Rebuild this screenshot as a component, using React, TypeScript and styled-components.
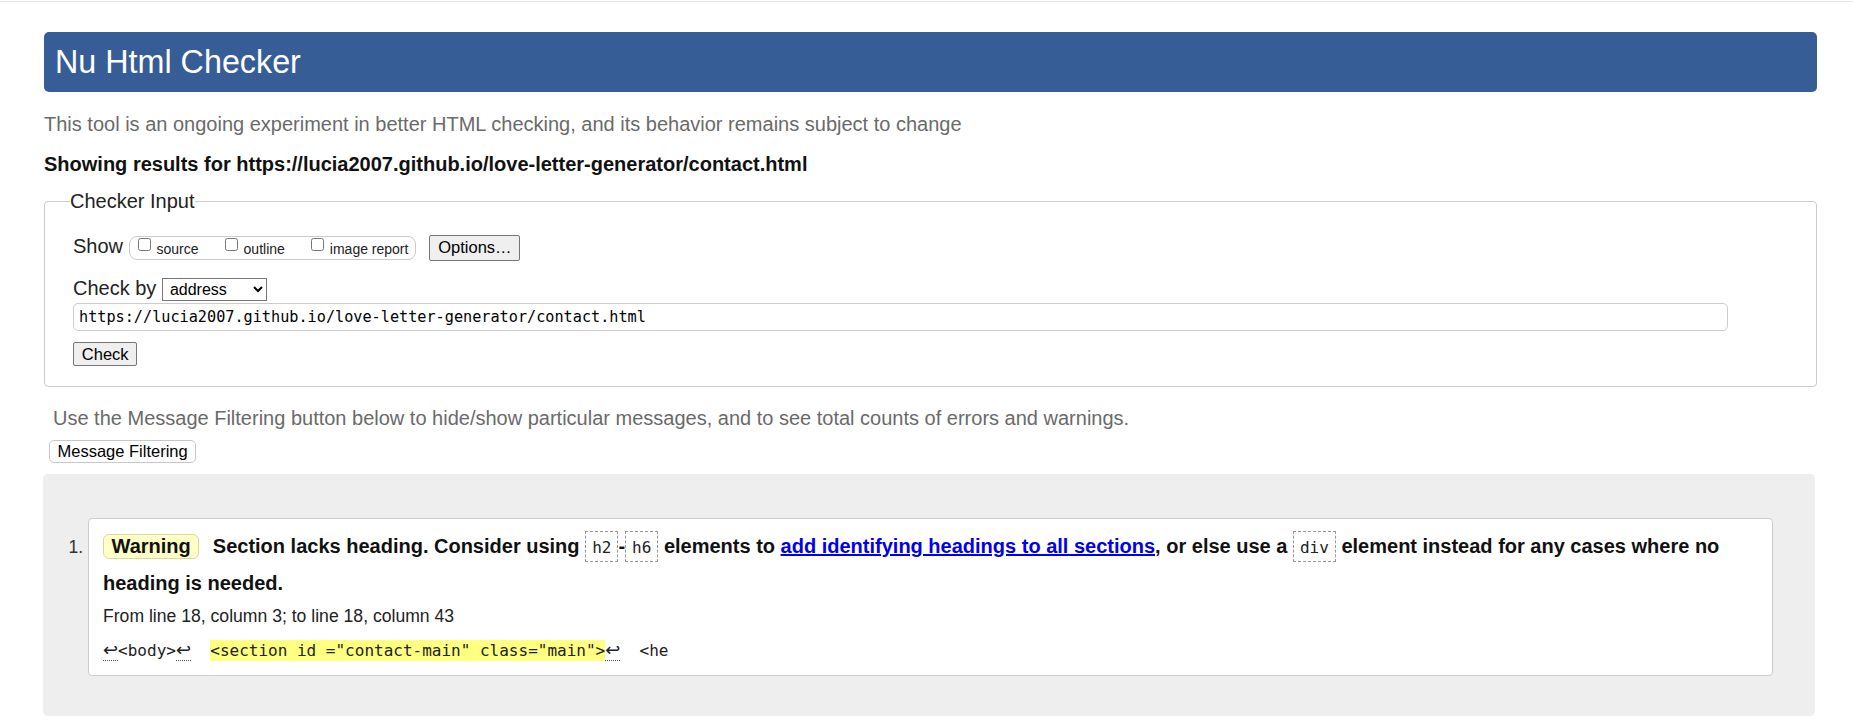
import React from 'react';
import styled, { createGlobalStyle } from 'styled-components';

const GlobalStyle = createGlobalStyle`
  html, body {
    margin: 0;
    padding: 0;
    background: #fff;
  }
  body {
    font-family: "Liberation Sans", Arial, sans-serif;
    color: #222;
  }
`;

const SANS = '"Liberation Sans", Arial, sans-serif';
const MONO = '"DejaVu Sans Mono", "Liberation Mono", monospace';

const TopRule = styled.div`
  height: 1px;
  margin-top: 1px;
  background: #e2e2e2;
`;

const Page = styled.main`
  padding: 30px 36px 0 44px;
`;

const Banner = styled.h1`
  margin: 0;
  padding: 11.5px 11px;
  border-radius: 5px;
  background: #365d95;
  color: #fff;
  font-size: 32.3px;
  font-weight: normal;
  line-height: normal;
`;

const Intro = styled.p`
  margin: 20.6px 0 0;
  color: #6a6a6a;
  font-size: 20px;
  line-height: normal;
`;

const ResultsFor = styled.p`
  margin: 17.3px 0 0;
  color: #111;
  font-size: 20px;
  font-weight: bold;
  line-height: normal;
`;

const Fieldset = styled.fieldset`
  margin: 14.3px 0 0;
  padding: 0 28px 20px;
  min-width: 0;
  border: 1px solid #ccc;
  border-radius: 4px;
`;

const Legend = styled.legend`
  margin-left: -3px;
  padding: 0;
  color: #222;
  font-size: 20px;
  line-height: normal;
`;

const Row = styled.div<{ $align: string; $top: number }>`
  display: flex;
  align-items: ${(p) => p.$align};
  margin-top: ${(p) => p.$top}px;
`;

const FieldLabel = styled.span`
  margin-right: 5.5px;
  color: #222;
  font-size: 20px;
  line-height: normal;
`;

const ShowGroup = styled.span`
  display: inline-flex;
  align-items: flex-start;
  box-sizing: border-box;
  height: 24px;
  margin-top: 1.5px;
  padding: 0 7px 0 4px;
  border: 1px solid #ccc;
  border-radius: 8px;
`;

const CheckLabel = styled.label<{ $last?: boolean }>`
  display: inline-flex;
  align-items: flex-start;
  margin-right: ${(p) => (p.$last ? 0 : 22)}px;
  color: #222;
  font-size: 14px;
  line-height: 16px;
`;

const Box = styled.input`
  width: 13px;
  height: 13px;
  margin: 1px 6px 0 4px;
`;

const BoxText = styled.span`
  margin-top: 4px;
`;

const GrayButton = styled.button<{ $h: number; $top?: number; $left?: number }>`
  box-sizing: border-box;
  height: ${(p) => p.$h}px;
  margin: ${(p) => p.$top || 0}px 0 0 ${(p) => p.$left || 0}px;
  padding: 0 7.8px;
  border: 1px solid #767676;
  border-radius: 2px;
  background: #efefef;
  color: #000;
  font-family: ${SANS};
  font-size: 16.5px;
  line-height: normal;
`;

const Select = styled.select`
  box-sizing: border-box;
  width: 105px;
  height: 23px;
  padding: 0 0 0 3px;
  border: 1px solid #767676;
  border-radius: 0;
  background: #fff;
  color: #000;
  font-family: ${SANS};
  font-size: 16px;
`;

const UrlInput = styled.input`
  display: block;
  box-sizing: border-box;
  width: calc(100% - 60px);
  height: 28px;
  margin: 2px 0 0;
  padding: 0 5px;
  border: 1px solid #ccc;
  border-radius: 5px;
  color: #000;
  font-family: ${MONO};
  font-size: 15.2px;
`;

const Hint = styled.p`
  margin: 19.6px 0 0 9px;
  color: #6a6a6a;
  font-size: 20px;
  line-height: normal;
`;

const FilterButton = styled.button`
  display: block;
  box-sizing: border-box;
  height: 23px;
  margin: 10.4px 0 0 5px;
  padding: 0 7.5px;
  border: 1px solid #c8c8c8;
  border-radius: 5px;
  background: #fff;
  color: #000;
  font-family: ${SANS};
  font-size: 16.5px;
  line-height: normal;
`;

const Results = styled.section`
  margin: 11px 2px 0 -1px;
  padding: 44px 42px 40px 45px;
  border-radius: 5px;
  background: #eee;
`;

const MessageList = styled.ol`
  margin: 0;
  padding: 0;
  list-style: decimal;
`;

const MessageItem = styled.li`
  padding: 8.6px 14px 15px;
  border: 1px solid #ccc;
  border-radius: 4px;
  background: #fff;
  color: #333;
  font-size: 17.6px;

  &::marker {
    color: #333;
    font-size: 17.6px;
  }
`;

const MessageText = styled.p`
  margin: 0;
  color: #111;
  font-size: 20px;
  font-weight: bold;
  line-height: 37px;
`;

const Badge = styled.strong`
  display: inline-block;
  margin-right: 8px;
  padding: 0 7.5px;
  border: 1px solid #dcd89c;
  border-radius: 6px;
  background: #ffffc8;
  line-height: normal;
`;

const Code = styled.code`
  display: inline-block;
  padding: 6px 6px 4px;
  border: 1px dashed #999;
  color: #222;
  font-family: ${MONO};
  font-size: 16px;
  font-weight: normal;
  line-height: normal;
`;

const DocLink = styled.a`
  color: #0000ee;
  text-decoration: underline;
`;

const Location = styled.p`
  margin: 4px 0 0;
  color: #222;
  font-size: 17.6px;
  line-height: normal;
`;

const Extract = styled.p`
  margin: 12px 0 0;
  color: #222;
  font-family: ${MONO};
  font-size: 16px;
  line-height: normal;
  white-space: pre;
`;

const LineFeed = styled.span`
  border-bottom: 1px dotted #555;
  font-family: "DejaVu Sans", sans-serif;
  font-size: 18px;
`;

const Mark = styled.mark`
  padding: 1px 0;
  background: #ffff80;
  color: #222;
`;

const url = 'https://lucia2007.github.io/love-letter-generator/contact.html';

const options = [
  { name: 'source', last: false },
  { name: 'outline', last: false },
  { name: 'image report', last: true },
];

export default function App() {
  return (
    <>
      <GlobalStyle />
      <TopRule />
      <Page>
        <Banner>Nu Html Checker</Banner>
        <Intro>
          This tool is an ongoing experiment in better HTML checking, and its behavior remains subject to change
        </Intro>
        <ResultsFor>Showing results for {url}</ResultsFor>

        <Fieldset>
          <Legend>Checker Input</Legend>
          <Row $align="flex-start" $top={21.4}>
            <FieldLabel>Show</FieldLabel>
            <ShowGroup>
              {options.map((o) => (
                <CheckLabel key={o.name} $last={o.last}>
                  <Box type="checkbox" />
                  <BoxText>{o.name}</BoxText>
                </CheckLabel>
              ))}
            </ShowGroup>
            <GrayButton $h={26} $left={13}>Options…</GrayButton>
          </Row>
          <Row $align="baseline" $top={16.6}>
            <FieldLabel>Check by</FieldLabel>
            <Select defaultValue="address">
              <option value="address">address</option>
              <option value="upload">file upload</option>
              <option value="textarea">text input</option>
            </Select>
          </Row>
          <UrlInput type="url" defaultValue={url} />
          <GrayButton $h={24} $top={11}>Check</GrayButton>
        </Fieldset>

        <Hint>
          Use the Message Filtering button below to hide/show particular messages, and to see total counts of errors and warnings.
        </Hint>
        <FilterButton>Message Filtering</FilterButton>

        <Results>
          <MessageList>
            <MessageItem>
              <MessageText>
                <Badge>Warning</Badge> Section lacks heading. Consider using <Code>h2</Code>-<Code>h6</Code> elements
                to <DocLink href="#">add identifying headings to all sections</DocLink>, or else use a{' '}
                <Code>div</Code> element instead for any cases where no heading is needed.
              </MessageText>
              <Location>From line 18, column 3; to line 18, column 43</Location>
              <Extract>
                <LineFeed>↩</LineFeed>
                {'<body>'}
                <LineFeed>↩</LineFeed>
                {'  '}
                <Mark>{'<section id ="contact-main" class="main">'}</Mark>
                <LineFeed>↩</LineFeed>
                {'  <he'}
              </Extract>
            </MessageItem>
          </MessageList>
        </Results>
      </Page>
    </>
  );
}
